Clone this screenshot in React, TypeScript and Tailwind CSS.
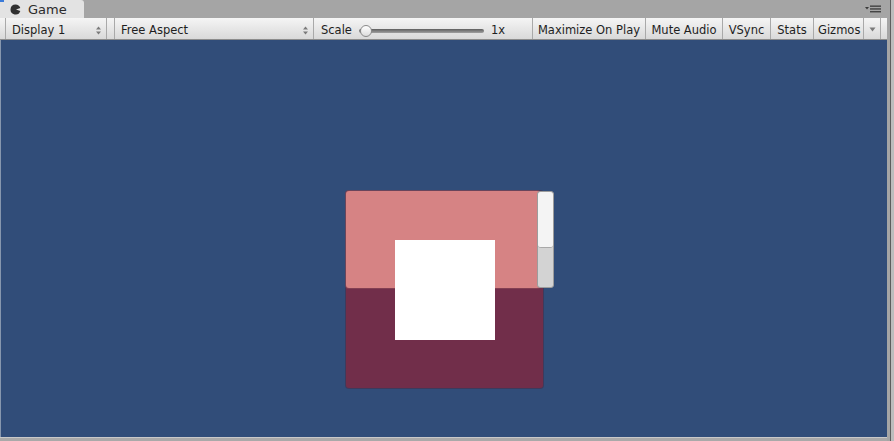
import React from "react";

const font = { fontFamily: '"DejaVu Sans", Verdana, sans-serif' };

function UpDown() {
  return (
    <svg width="7" height="9" viewBox="0 0 7 9" className="shrink-0">
      <path d="M3.5 0.5 L6 3.5 L1 3.5 Z" fill="#7a7a7a" />
      <path d="M3.5 8.5 L6 5.5 L1 5.5 Z" fill="#7a7a7a" />
    </svg>
  );
}

function ToolButton({ label, width }: { label: string; width: number }) {
  return (
    <div
      className="flex h-full shrink-0 items-center justify-center border-r border-[#a9a9a9] pt-[4px] text-[11.5px] text-[#1e1e1e]"
      style={{ width }}
    >
      {label}
    </div>
  );
}

export default function App() {
  return (
    <div className="flex h-[441px] w-[894px] overflow-hidden bg-[#a5a5a5]" style={font}>
      <div className="flex w-[887px] shrink-0 flex-col">
        {/* tab strip */}
        <div className="flex h-[18px] shrink-0 items-end bg-[#a5a5a5]">
          <div className="relative flex h-[18px] w-[84px] items-center gap-[7px] rounded-tr-[3px] bg-[#e3e3e3] pl-[10px] pt-[1px]">
            <span className="absolute left-0 top-0 h-[2px] w-[4px] bg-[#3b7bd9]" />
            <svg width="11" height="11" viewBox="0 0 11 11">
              <path d="M5.5 0.5 A5 5 0 1 0 10.3 7 L6 5.5 L10.3 4 A5 5 0 0 0 5.5 0.5 Z" fill="#303030" />
            </svg>
            <span className="text-[13px] leading-none text-[#2b2b2b]">Game</span>
          </div>
          <div className="flex-1" />
        </div>

        {/* toolbar */}
        <div className="flex h-[22px] shrink-0 items-stretch border-b border-[#8c8c8c] bg-gradient-to-b from-[#f5f5f5] to-[#d9d9d9]">
          <div className="w-[6px] shrink-0 border-r border-[#a9a9a9]" />
          <div className="flex w-[101px] shrink-0 items-center justify-between border-r border-[#a9a9a9] pl-[6px] pr-[4px] pt-[4px] text-[11.5px] text-[#1e1e1e]">
            <span>Display 1</span>
            <UpDown />
          </div>
          <div className="w-[8px] shrink-0 border-r border-[#a9a9a9]" />
          <div className="flex w-[199px] shrink-0 items-center justify-between border-r border-[#a9a9a9] pl-[6px] pr-[4px] pt-[4px] text-[11.5px] text-[#1e1e1e]">
            <span>Free Aspect</span>
            <UpDown />
          </div>
          <div className="flex w-[219px] shrink-0 items-center border-r border-[#a9a9a9] pl-[7px] pt-[4px] text-[11.5px] text-[#1e1e1e]">
            <span className="w-[38px]">Scale</span>
            <div className="relative flex h-[12px] w-[125px] items-center">
              <div className="h-[4px] w-full rounded-full bg-gradient-to-b from-[#5e5e5e] to-[#a0a0a0]" />
              <div className="absolute left-[1px] top-0 h-[12px] w-[12px] rounded-full border border-[#8a8a8a] bg-gradient-to-b from-[#ffffff] to-[#dcdcdc]" />
            </div>
            <span className="ml-[7px]">1x</span>
          </div>
          <ToolButton label="Maximize On Play" width={113} />
          <ToolButton label="Mute Audio" width={77} />
          <ToolButton label="VSync" width={48} />
          <ToolButton label="Stats" width={43} />
          <div className="flex w-[50px] shrink-0 items-center border-r border-[#a9a9a9] pl-[4px] pt-[4px] text-[11.5px] text-[#1e1e1e]">
            Gizmos
          </div>
          <div className="flex w-[17px] shrink-0 items-center justify-center border-r border-[#a9a9a9] pt-[2px]">
            <svg width="7" height="5" viewBox="0 0 7 5">
              <path d="M0.5 0.5 L6.5 0.5 L3.5 4.5 Z" fill="#7a7a7a" />
            </svg>
          </div>
          <div className="flex-1" />
        </div>

        {/* game view */}
        <div className="relative h-[397px] shrink-0 border-l border-[#8797ae] bg-[#314d79]">
          <div className="absolute left-[345px] top-[151px] h-[197px] w-[197px] rounded-[3px] bg-[#712e4a] shadow-[0_0_0_1px_rgba(80,30,50,0.4)]" />
          <div className="absolute left-[345px] top-[151px] h-[97px] w-[194px] rounded-[3px] bg-[#d68384] shadow-[0_0_0_1px_rgba(150,80,90,0.5)]" />
          <div className="absolute left-[536px] top-[151px] flex h-[97px] w-[17px] flex-col overflow-hidden rounded-[3px] border border-[#9c9c9c] bg-[#d3d3d3]">
            <div className="h-[56px] rounded-[3px] border-b border-[#a8a8a8] bg-[#f4f4f4]" />
          </div>
          <div className="absolute left-[394px] top-[200px] h-[100px] w-[100px] bg-white" />
        </div>
        <div className="h-[1px] shrink-0 bg-[#c9c9c9]" />
        <div className="flex-1 bg-[#a9a9a9]" />
      </div>

      {/* right edge */}
      <div className="relative flex w-[7px] shrink-0">
        <div className="w-[3px] bg-[#a5a5a5]" />
        <div className="w-[1px] bg-[#5e5e5e]" />
        <div className="flex-1 bg-[#bdbdbd]" />
        <svg width="17" height="8" viewBox="0 0 17 8" className="absolute right-[12px] top-[5px]">
          <path d="M0 2 L4 2 L2 4.5 Z" fill="#3a3a3a" />
          <rect x="5" y="0.5" width="11" height="1.3" fill="#3a3a3a" />
          <rect x="5" y="3.3" width="11" height="1.3" fill="#3a3a3a" />
          <rect x="5" y="6.1" width="11" height="1.3" fill="#3a3a3a" />
        </svg>
      </div>
    </div>
  );
}
